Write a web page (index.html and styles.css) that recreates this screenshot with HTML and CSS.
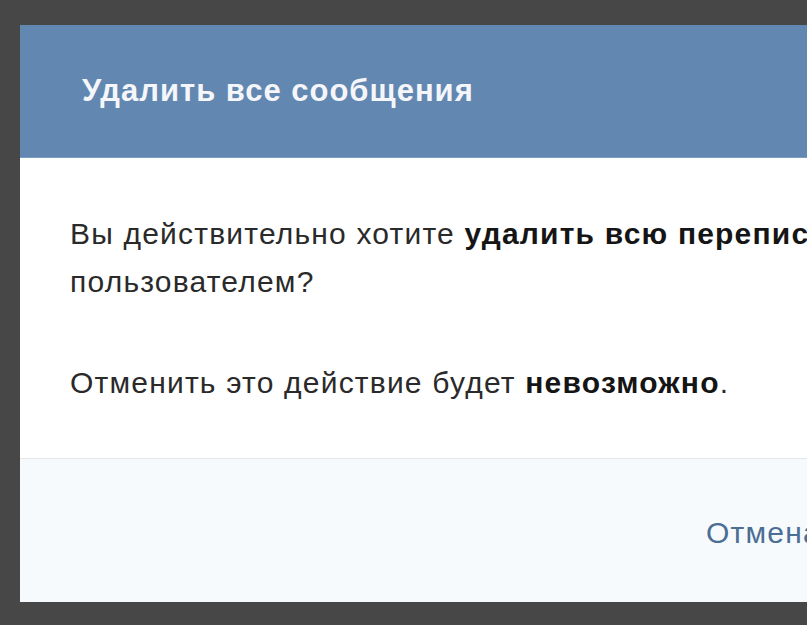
FILE: index.html
```html
<!DOCTYPE html>
<html lang="ru">
<head>
<meta charset="utf-8">
<title>Удалить все сообщения</title>
<link rel="stylesheet" href="styles.css">
</head>
<body>
<div class="page">
  <div class="dialog">
    <div class="dialog-header">
      <div class="dialog-title">Удалить все сообщения</div>
    </div>
    <div class="dialog-body">
      <p class="para">Вы действительно хотите <b>удалить всю переписку</b> с этим<br>пользователем?</p>
      <p class="para para-second">Отменить это действие будет <b>невозможно</b>.</p>
    </div>
    <div class="dialog-footer">
      <span class="btn-cancel">Отмена</span>
      <span class="btn-delete">Удалить</span>
    </div>
  </div>
</div>
</body>
</html>
```

FILE: styles.css
```css
html, body {
  margin: 0;
  padding: 0;
  height: 100%;
  overflow: hidden;
}
body {
  background: #474747;
  font-family: "Liberation Sans", Arial, sans-serif;
}
.page {
  padding: 25px 0 0 20px;
}
.dialog {
  width: 1300px;
  background: #ffffff;
}
.dialog-header {
  height: 133px;
  background: #6287b1;
  display: flex;
  align-items: center;
  padding-left: 62px;
  box-sizing: border-box;
  border-bottom: 1px solid #7b9bc0;
}
.dialog-title {
  color: #f4f6f9;
  font-size: 31px;
  font-weight: 700;
  letter-spacing: 1px;
  margin-top: 0;
}
.dialog-body {
  height: 300px;
  box-sizing: border-box;
  padding: 52px 0 0 50px;
  color: #2a2a2a;
  font-size: 30px;
  line-height: 48px;
  letter-spacing: 1.2px;
}
.para {
  margin: 0;
  white-space: nowrap;
}
.para b {
  color: #151515;
  font-weight: 700;
}
.para-second {
  margin-top: 53px;
}
.dialog-footer {
  height: 144px;
  box-sizing: border-box;
  border-top: 1px solid #e4e6ea;
  background: #f7fafc;
  display: flex;
  align-items: center;
  padding: 4px 0 0 686px;
  gap: 40px;
  font-size: 30px;
  letter-spacing: 1.2px;
}
.btn-cancel {
  color: #4a6e94;
}
.btn-delete {
  color: #ffffff;
  background: #5e81a8;
  padding: 10px 24px;
}
```
